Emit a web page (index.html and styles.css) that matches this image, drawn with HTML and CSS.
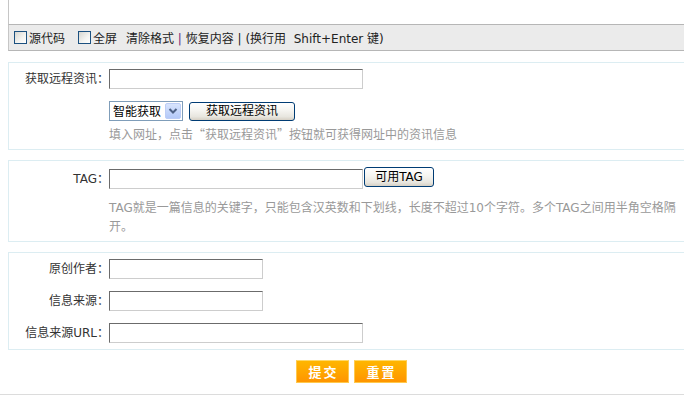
FILE: index.html
```html
<!DOCTYPE html>
<html lang="zh-CN">
<head>
<meta charset="utf-8">
<title>发布信息</title>
<link rel="stylesheet" href="styles.css">
</head>
<body>
<div class="page">
  <div class="editor"></div>
  <div class="toolbar">
    <label class="chk"><input class="chk-box" type="checkbox"><span>源代码</span></label>
    <label class="chk chk-next"><input class="chk-box" type="checkbox"><span>全屏</span></label>
    <span class="actions">清除格式 <span class="sep sep-visited">|</span> 恢复内容 <span class="sep">|</span> (换行用&nbsp; Shift+Enter 键)</span>
  </div>

  <div class="box box-remote">
    <div class="row">
      <label class="lbl">获取远程资讯：</label>
      <input class="ipt ipt-long" type="text">
    </div>
    <div class="row row-gap indent">
      <span class="select-wrap">
        <select class="sel"><option>智能获取</option></select>
        <svg class="sel-arrow" width="16" height="16" viewBox="0 0 16 16">
          <defs>
            <linearGradient id="ag" x1="0" y1="0" x2="0" y2="1">
              <stop offset="0" stop-color="#d9e5fd"/>
              <stop offset="1" stop-color="#b2c8f8"/>
            </linearGradient>
          </defs>
          <rect x="0.5" y="0.5" width="15" height="15" rx="1.5" fill="url(#ag)" stroke="#bccdf6"/>
          <path d="M4.5 6 L8 9.5 L11.5 6" fill="none" stroke="#4d6185" stroke-width="2"/>
        </svg>
      </span>
      <button class="xpbtn btn-fetch" type="button">获取远程资讯</button>
    </div>
    <p class="help help-cjk indent">填入网址，点击“获取远程资讯”按钮就可获得网址中的资讯信息</p>
  </div>

  <div class="box box-tag">
    <div class="row row-top">
      <label class="lbl lbl-mid">TAG：</label>
      <input class="ipt ipt-long ipt-drop" type="text">
      <button class="xpbtn btn-tag" type="button">可用TAG</button>
    </div>
    <p class="help help-tag indent">TAG就是一篇信息的关键字，只能包含汉英数和下划线，长度不超过10个字符。多个TAG之间用半角空格隔开。</p>
  </div>

  <div class="box box-src">
    <div class="row">
      <label class="lbl">原创作者：</label>
      <input class="ipt ipt-short" type="text">
    </div>
    <div class="row row-gap">
      <label class="lbl">信息来源：</label>
      <input class="ipt ipt-short" type="text">
    </div>
    <div class="row row-gap">
      <label class="lbl">信息来源URL：</label>
      <input class="ipt ipt-long" type="text">
    </div>
  </div>

  <div class="submit-bar">
    <button class="obtn" type="submit">提交</button>
    <button class="obtn" type="reset">重置</button>
  </div>
</div>
<div class="footer-line"></div>
</body>
</html>
```

FILE: styles.css
```css
html, body {
  margin: 0;
  padding: 0;
  background: #fff;
  overflow: hidden;
}

body {
  font-family: "DejaVu Sans", "Noto Sans CJK SC", sans-serif;
  font-size: 12px;
  color: #333;
}

.page {
  margin-left: 8px;
  width: 687px;
}

/* editor + toolbar */
.editor {
  height: 24px;
  border-left: 1px solid #c6c6c6;
  border-bottom: 1px solid #b6b6b6;
  background: #fff;
}

.toolbar {
  height: 25px;
  display: flex;
  align-items: center;
  background: #ebebeb;
  border-left: 1px solid #c6c6c6;
  border-bottom: 1px solid #b6b6b6;
  color: #222;
  white-space: nowrap;
}

.chk {
  display: flex;
  align-items: center;
  margin-left: 5px;
}

.chk-next {
  margin-left: 13px;
}

.chk-box {
  -webkit-appearance: none;
  appearance: none;
  box-sizing: border-box;
  width: 13px;
  height: 13px;
  margin: 0 2px 0 0;
  border: 1px solid #1c5180;
  background: linear-gradient(135deg, #d6d6d0 0%, #f4f4f1 60%, #ffffff 100%);
}

.actions {
  margin-left: 9px;
}

.sep {
  color: #222;
}

.sep-visited {
  color: #6a2a78;
}

/* boxes */
.box {
  border: 1px solid #dcedf2;
  margin-top: 10px;
}

.box-remote {
  margin-top: 11px;
  padding: 6px 0 6px;
}

.box-tag {
  padding: 6px 0 4px;
}

.box-src {
  padding: 6px 0 6px;
}

.row {
  display: flex;
  align-items: center;
  height: 20px;
}

.row-top {
  align-items: flex-start;
  height: 22px;
}

.row-gap {
  margin-top: 12px;
}

.indent {
  padding-left: 100px;
}

.lbl {
  width: 100px;
  flex-shrink: 0;
  text-align: right;
  line-height: 20px;
  color: #333;
}

.lbl-mid {
  margin-top: 2px;
}

.ipt {
  box-sizing: border-box;
  height: 20px;
  margin: 0;
  padding: 0 2px;
  border: 1px solid;
  border-color: #6b6b6b #cdcdcd #cdcdcd #6b6b6b;
  background: #fff;
  font: inherit;
  outline: none;
}

.ipt-long {
  width: 254px;
}

.ipt-short {
  width: 154px;
}

.ipt-drop {
  margin-top: 2px;
}

/* select */
.select-wrap {
  position: relative;
  display: inline-block;
  width: 74px;
  height: 20px;
}

.sel {
  -webkit-appearance: none;
  appearance: none;
  box-sizing: border-box;
  width: 74px;
  height: 20px;
  margin: 0;
  padding: 0 0 0 3px;
  border: 1px solid #7f9db9;
  border-radius: 0;
  background: #fff;
  color: #000;
  font-family: "Noto Sans CJK SC", sans-serif;
  font-size: 12px;
  line-height: 18px;
}

.sel-arrow {
  position: absolute;
  right: 2px;
  top: 2px;
  pointer-events: none;
}

/* XP style buttons */
.xpbtn {
  box-sizing: border-box;
  height: 19px;
  margin: 0;
  padding: 0;
  border: 1px solid #003c74;
  border-radius: 3px;
  background: linear-gradient(#ffffff 0%, #f5f4f0 45%, #e8e6df 80%, #d6d0c4 100%);
  color: #000;
  font-family: "DejaVu Sans", "Noto Sans CJK SC", sans-serif;
  font-size: 12px;
  line-height: 17px;
}

.btn-fetch {
  width: 106px;
  margin-left: 6px;
}

.btn-tag {
  width: 70px;
  height: 20px;
  margin-left: 1px;
}

/* help text */
.help {
  margin: 3px 0 0;
  line-height: 19px;
  color: #999;
}

.help-cjk {
  font-family: "Noto Sans CJK SC", sans-serif;
}

.help-tag {
  margin-top: 10px;
  padding-right: 0;
}

/* submit */
.submit-bar {
  margin-top: 10px;
  display: flex;
  justify-content: center;
  gap: 5px;
}

.obtn {
  box-sizing: border-box;
  width: 53px;
  height: 23px;
  margin: 0;
  padding: 0 0 0 2px;
  border: 1px solid #ffc94d;
  border-top-color: #ffd86a;
  background: linear-gradient(#ffb600 0%, #ffa600 50%, #ff9500 100%);
  color: #fff;
  font-family: "Noto Sans CJK SC", sans-serif;
  font-size: 13px;
  font-weight: bold;
  letter-spacing: 2px;
  line-height: 21px;
}

.footer-line {
  margin-top: 11px;
  border-top: 1px solid #dcdcdc;
  height: 20px;
}
```
